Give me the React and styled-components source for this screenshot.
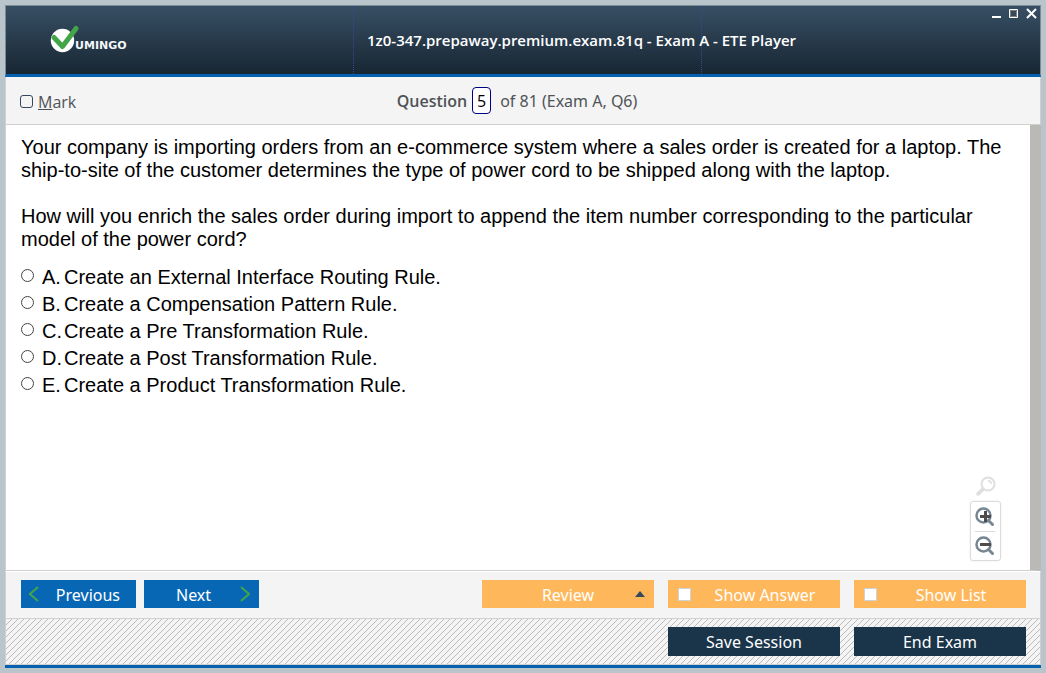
import React from "react";
import styled, { createGlobalStyle } from "styled-components";

const uiFont = `"Open Sans", "Noto Sans", sans-serif`;
const buttonFont = `"Noto Sans", "Open Sans", sans-serif`;

const GlobalStyle = createGlobalStyle`
  *, *::before, *::after { box-sizing: border-box; }
  body { margin: 0; background: #b9c5cb; }
  button, input { font: inherit; }
`;

const Frame = styled.div`
  min-height: 100vh;
  padding: 5px;
  display: flex;
  flex-direction: column;
`;

const Window = styled.div`
  flex: 1;
  display: flex;
  flex-direction: column;
  background: #f4f4f4;
  border-bottom: 3px solid #0561b0;
`;

const Header = styled.header`
  height: 72px;
  display: grid;
  grid-template-columns: 347fr 349fr 338fr;
  border: 1px solid #7b8c92;
  border-bottom: 3px solid #0561b0;
  background: linear-gradient(#374f64, #182633);
`;

const Brand = styled.div`
  padding: 19px 0 0 44px;
`;

const TitleCell = styled.div`
  min-width: 0;
  display: flex;
  align-items: center;
  padding-left: 13px;
  border: 1px dotted #34489a;
  border-width: 0 1px;
`;

const Title = styled.h1`
  margin: 0;
  white-space: nowrap;
  font: 600 15px/20px ${uiFont};
  color: #fff;
`;

const WindowControls = styled.div`
  display: flex;
  justify-content: flex-end;
  gap: 5px;
  padding: 2px 2px 0 0;
`;

const ControlButton = styled.button`
  width: 12px;
  height: 12px;
  padding: 0;
  border: 0;
  background: none;
  svg { display: block; }
`;

const QuestionBar = styled.div`
  height: 48px;
  display: grid;
  grid-template-columns: 1fr auto 1fr;
  align-items: center;
  padding: 0 26px 0 14px;
  border: 1px solid #d0d0d0;
  border-top: 0;
  font: 16px/22px ${uiFont};
  color: #4f5357;
`;

const MarkLabel = styled.label`
  display: flex;
  align-items: center;
  gap: 5px;
  padding-top: 2px;
`;

const MarkBox = styled.input`
  appearance: none;
  width: 13px;
  height: 13px;
  margin: 0;
  border: 1px solid #34495e;
  border-radius: 3px;
`;

const QuestionPosition = styled.div`
  display: flex;
  align-items: center;
  gap: 5px;
`;

const QuestionLabel = styled.label`
  font-weight: 600;
`;

const QuestionTotal = styled.span`
  font-family: ${buttonFont};
`;

const QuestionInput = styled.input`
  width: 19px;
  height: 27px;
  margin-right: 4px;
  padding: 0;
  border: 1px solid #000080;
  border-radius: 4px;
  background: #fff;
  color: #000;
  text-align: center;
`;

const Content = styled.main`
  flex: 1;
  position: relative;
  padding: 11px 24px 10px 15px;
  background: #fff;
  border-left: 1px solid #d0d0d0;
  border-right: 11px solid #bbb9b5;
  border-bottom: 1px solid #d0d0d0;
  font: 20px/23px "Liberation Sans", Arial, sans-serif;
  color: #000;
`;

const Prompt = styled.p`
  margin: 0 0 23px;
`;

const Answers = styled.fieldset`
  margin: -10px 0 0;
  padding: 0;
  border: 0;
`;

const Answer = styled.label`
  display: grid;
  grid-template-columns: 13px 22px 1fr;
  height: 27px;
  align-items: center;
`;

const Letter = styled.span`
  padding-left: 8px;
`;

const AnswerText = styled.span`
  padding-left: 8px;
`;

const Radio = styled.input`
  appearance: none;
  width: 13px;
  height: 13px;
  margin: 0 0 4px;
  border: 1px solid #444;
  border-radius: 50%;
  background: #fff;
`;

const ZoomTools = styled.div`
  position: absolute;
  right: 29px;
  bottom: 9px;
  display: flex;
  flex-direction: column;
  align-items: center;
  gap: 5px;
`;

const ZoomPanel = styled.div`
  width: 31px;
  padding: 0 6px 0 4px;
  border: 1px solid #dcdcdc;
  border-radius: 3px;
  box-shadow: 0 0 2px #e4e4e4;
`;

const ZoomButton = styled.button`
  width: 20px;
  height: ${(p) => (p.$bare ? "21px" : "29px")};
  display: flex;
  align-items: center;
  justify-content: center;
  padding: 0;
  border: 0;
  background: none;
  & + & { border-top: 1px solid #dcdcdc; }
`;

const ActionBar = styled.div`
  height: 48px;
  display: flex;
  align-items: flex-start;
  gap: 14px;
  padding: 8px 14px 0 15px;
  border: 1px solid #d0d0d0;
  border-top: 1px solid #fff;
`;

const NavGroup = styled.nav`
  display: flex;
  gap: 8px;
  margin-right: auto;
`;

const SessionBar = styled.footer`
  height: 46px;
  display: flex;
  justify-content: flex-end;
  gap: 14px;
  padding: 8px 14px 0 15px;
  border: 1px solid #d0d0d0;
  border-top: 0;
  background: linear-gradient(135deg, #f4f4f4 45%, #bcbcbc 45% 55%, #f4f4f4 55%) 0 0 / 6px 6px;
`;

const NavButton = styled.button`
  width: 115px;
  height: 28px;
  display: flex;
  align-items: center;
  justify-content: space-between;
  padding: ${(p) => (p.$forward ? "2px 9px 0 32px" : "2px 16px 0 8px")};
  border: 0;
  background: #0867b5;
  color: #fff;
  font: 16px/22px ${buttonFont};
  svg { margin-bottom: 2px; }
`;

const ReviewButton = styled.button`
  width: 172px;
  height: 28px;
  display: grid;
  grid-template-columns: 1fr auto 1fr;
  align-items: center;
  padding: 2px 9px 0;
  border: 0;
  background: #ffb75c;
  color: #fff;
  font: 16px/22px ${buttonFont};
  span { grid-column: 2; }
  svg { justify-self: end; margin-bottom: 2px; }
`;

const Toggle = styled.label`
  width: 172px;
  height: 28px;
  display: flex;
  align-items: center;
  padding: 0 1px 0 10px;
  background: #ffb75c;
  color: #fff;
  font: 16px/22px ${buttonFont};
  span { flex: 1; padding-top: 2px; text-align: center; }
`;

const ToggleBox = styled.input`
  appearance: none;
  width: 13px;
  height: 13px;
  margin: 0;
  border: 1px solid #cfd3d6;
  background: #fff;
`;

const SessionButton = styled.button`
  width: 172px;
  height: 29px;
  padding: 0;
  border: 0;
  background: #1a344a;
  color: #fff;
  font: 16px/22px ${buttonFont};
`;

const LogoText = styled.text`
  font: bold 11px "DejaVu Sans", sans-serif;
  fill: #f4f6f8;
`;

const Logo = () => (
  <svg width="86" height="28" viewBox="0 0 86 28" role="img" aria-label="Vumingo">
    <circle cx="12.500" cy="15.500" r="11.700" fill="#fff" />
    <path d="M4 12.500L12.500 21.500L26 3.500" fill="none" stroke="#42a648" strokeWidth="5" strokeLinecap="round" strokeLinejoin="round" />
    <LogoText x="25" y="24">UMINGO</LogoText>
  </svg>
);

const Magnifier = ({ sign }) => (
  <svg width="20" height="20" viewBox="0 0 20 20" fill="none">
    <circle cx="8.500" cy="8.500" r="7" stroke="#768692" strokeWidth="2.500" />
    <path d="M13.500 13.500L17.500 17.500" stroke="#768692" strokeWidth="3" strokeLinecap="round" />
    <path d={sign === "plus" ? "M5 9.500H16M10.500 4V15" : "M5 8.500H16"} stroke="#4d4d4d" strokeWidth="3" />
  </svg>
);

const answers = [
  ["A.", "Create an External Interface Routing Rule."],
  ["B.", "Create a Compensation Pattern Rule."],
  ["C.", "Create a Pre Transformation Rule."],
  ["D.", "Create a Post Transformation Rule."],
  ["E.", "Create a Product Transformation Rule."],
];

export default function App() {
  return (
    <Frame>
      <GlobalStyle />
      <Window>
        <Header>
          <Brand><Logo /></Brand>
          <TitleCell>
            <Title>1z0-347.prepaway.premium.exam.81q - Exam A - ETE Player</Title>
          </TitleCell>
          <WindowControls>
            <ControlButton aria-label="Minimize">
              <svg width="12" height="12"><path d="M0 9H9" stroke="#fff" strokeWidth="2" /></svg>
            </ControlButton>
            <ControlButton aria-label="Maximize">
              <svg width="12" height="12">
                <path d="M0.500 1.500H8.500V9.500H0.500Z" fill="none" stroke="#fff" />
                <path d="M1.500 2.500H7.500V8.500H1.500Z" fill="none" stroke="#84807c" />
              </svg>
            </ControlButton>
            <ControlButton aria-label="Close">
              <svg width="12" height="12"><path d="M1 1L10 10M10 1L1 10" stroke="#fff" strokeWidth="2" /></svg>
            </ControlButton>
          </WindowControls>
        </Header>

        <QuestionBar>
          <MarkLabel>
            <MarkBox type="checkbox" />
            <span><u>M</u>ark</span>
          </MarkLabel>
          <QuestionPosition>
            <QuestionLabel htmlFor="question-number">Question</QuestionLabel>
            <QuestionInput id="question-number" defaultValue="5" />
            <QuestionTotal>of 81 (Exam A, Q6)</QuestionTotal>
          </QuestionPosition>
        </QuestionBar>

        <Content>
          <Prompt>
            Your company is importing orders from an e-commerce system where a sales order is created for a laptop. The
            ship-to-site of the customer determines the type of power cord to be shipped along with the laptop.
          </Prompt>
          <Prompt>
            How will you enrich the sales order during import to append the item number corresponding to the particular
            model of the power cord?
          </Prompt>
          <Answers>
            {answers.map(([letter, text]) => (
              <Answer key={letter}>
                <Radio type="radio" name="answer" />
                <Letter>{letter}</Letter>
                <AnswerText>{text}</AnswerText>
              </Answer>
            ))}
          </Answers>
          <ZoomTools>
            <ZoomButton $bare aria-label="Reset zoom">
              <svg width="20" height="20" viewBox="0 0 20 20" fill="none" stroke="#dedede">
                <circle cx="12" cy="8" r="6.500" strokeWidth="2" />
                <path d="M7 13L2 18" strokeWidth="3.500" strokeLinecap="round" />
                <path d="M12 4.500Q15 5 15.500 8" strokeWidth="1.500" />
              </svg>
            </ZoomButton>
            <ZoomPanel>
              <ZoomButton aria-label="Zoom in"><Magnifier sign="plus" /></ZoomButton>
              <ZoomButton aria-label="Zoom out"><Magnifier sign="minus" /></ZoomButton>
            </ZoomPanel>
          </ZoomTools>
        </Content>

        <ActionBar>
          <NavGroup>
            <NavButton>
              <svg width="10" height="16"><path d="M9 1L1 8L9 15" fill="none" stroke="#42a648" strokeWidth="2" /></svg>
              <span>Previous</span>
            </NavButton>
            <NavButton $forward>
              <span>Next</span>
              <svg width="10" height="16"><path d="M1 1L9 8L1 15" fill="none" stroke="#42a648" strokeWidth="2" /></svg>
            </NavButton>
          </NavGroup>
          <ReviewButton>
            <span>Review</span>
            <svg width="10" height="6"><path d="M0 6L5 0L10 6Z" fill="#34495e" /></svg>
          </ReviewButton>
          <Toggle>
            <ToggleBox type="checkbox" />
            <span>Show Answer</span>
          </Toggle>
          <Toggle>
            <ToggleBox type="checkbox" />
            <span>Show List</span>
          </Toggle>
        </ActionBar>
        <SessionBar>
          <SessionButton>Save Session</SessionButton>
          <SessionButton>End Exam</SessionButton>
        </SessionBar>
      </Window>
    </Frame>
  );
}
